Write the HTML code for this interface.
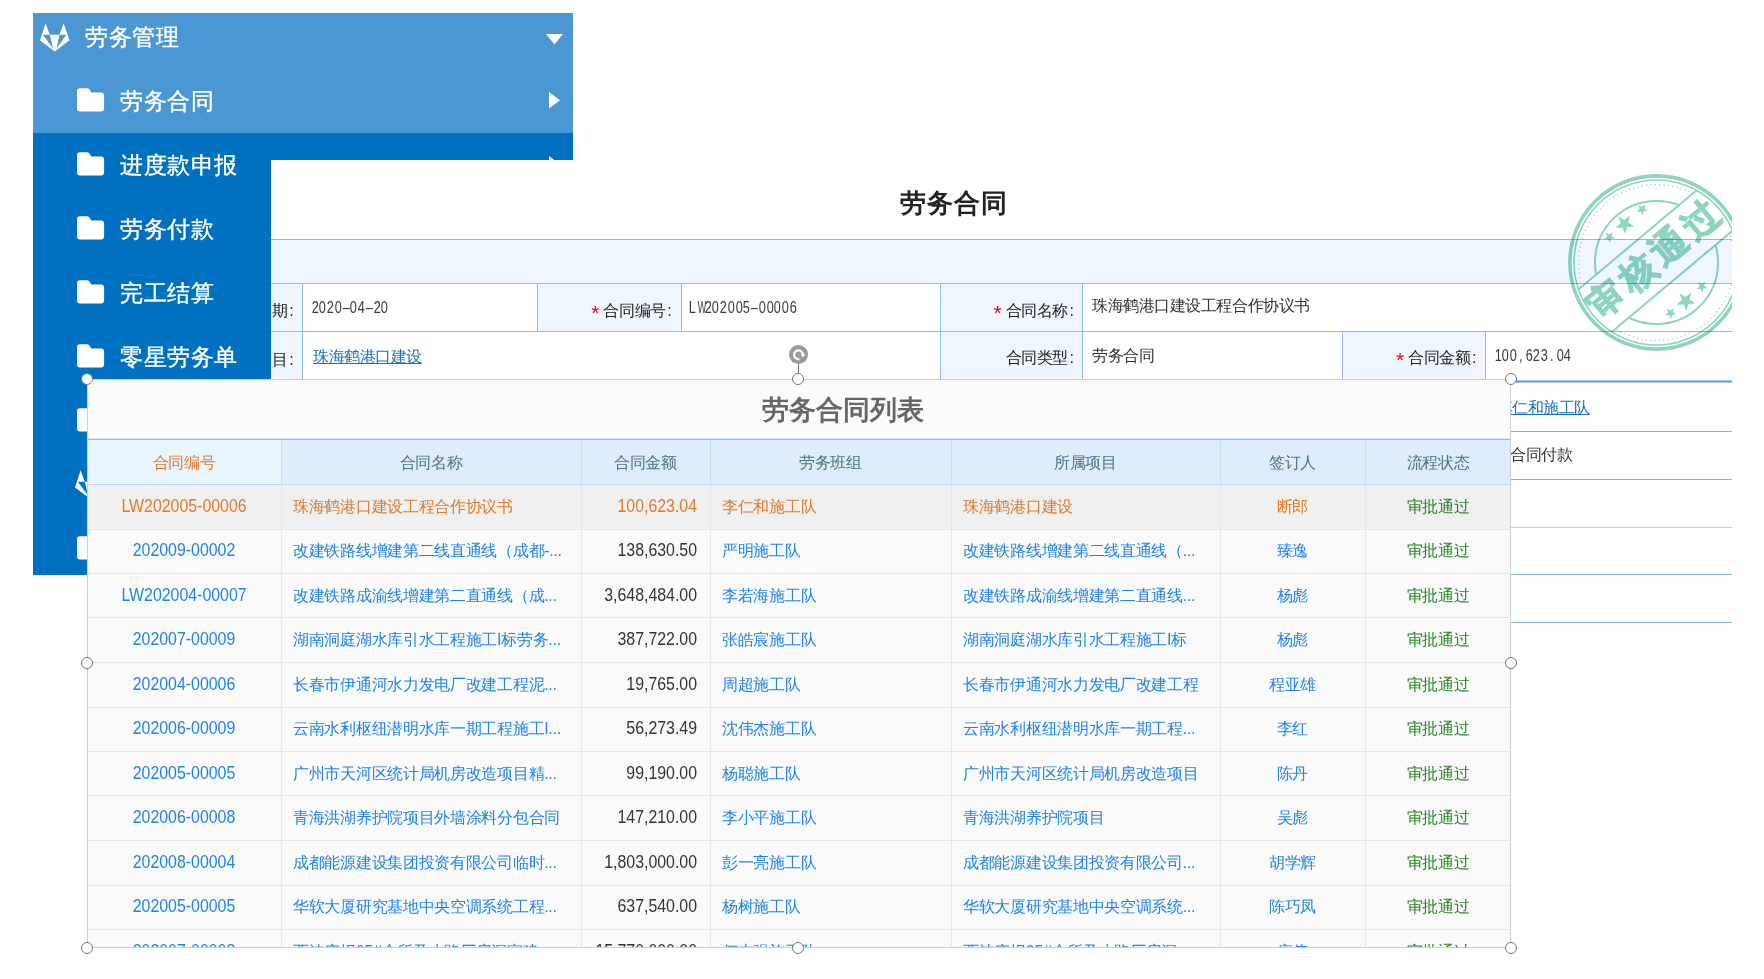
<!DOCTYPE html>
<html><head><meta charset="utf-8">
<style>
*{margin:0;padding:0;box-sizing:border-box}
html,body{width:1764px;height:979px;overflow:hidden;background:#fff;font-family:"Liberation Sans",sans-serif}
.t{position:absolute;white-space:nowrap}
#side{position:absolute;left:33px;top:13px;width:540px;height:562px;background:#0070c0;overflow:hidden}
#side .hl{position:absolute;left:0;top:0;width:540px;height:120px;background:#4a97d3}
.si{position:absolute;color:#fff;font-size:23px;letter-spacing:0.5px;-webkit-text-stroke:0.4px #fff;line-height:30px;white-space:nowrap}
#form{position:absolute;left:271px;top:160px;width:1461px;height:470px;background:#fff;overflow:hidden}
.ft{position:absolute;font-size:16px;letter-spacing:-0.45px;color:#333;white-space:nowrap;line-height:20px}
.mono{letter-spacing:0;font-size:15.5px;color:#3a3a3a}
.mono i{font-style:normal;display:inline-block;width:7.75px;text-align:center;transform:scale(0.82,1.1);transform-origin:50% 15px}
.mono i.w{transform:scale(0.58,1.1)}
.lbl{font-size:16px;color:#222}
.req{color:#f00;font-size:21px;vertical-align:-4px;letter-spacing:0}
#ov{position:absolute;left:87px;top:379px;width:1424px;height:569px;background:#fcfcfc;overflow:hidden}
.c{position:absolute;font-size:16px;letter-spacing:-0.3px;white-space:nowrap;line-height:20px}
.la{font-size:15.9px;letter-spacing:0;transform:scaleY(1.2);transform-origin:50% 15px}
.hd{position:absolute;width:12px;height:12px;border-radius:50%;background:#fff;border:1px solid #777}
</style></head><body>

<div id="side"><div class="hl"></div>
<svg class="t" style="left:6px;top:10px" width="32" height="30" viewBox="0 0 32 28" preserveAspectRatio="none"><path d="M1,16.3 L6.6,0.3 L10.8,10.9 L20.4,10.9 L24.6,0.3 L30.5,16.1 L15.8,26.5 Z" fill="#fff"/><path d="M3.9,10.9 L10.8,10.9 L14,23.7 Z M20.4,10.9 L27.3,10.9 L17.6,23.7 Z" fill="#4a97d3"/></svg>
<div class="si" style="left:52px;top:9px">劳务管理</div>
<svg class="t" style="left:513px;top:21px" width="18" height="11"><path d="M0,0 H17 L8.5,10.5 Z" fill="#fff"/></svg>
<svg class="t" style="left:43.599999999999994px;top:75.3px" width="28" height="24" viewBox="0 0 28 24"><path d="M3,0.3 H10 Q12,0.3 13,2 L14.2,4.6 H24 Q27.1,4.6 27.1,7.6 V20.5 Q27.1,23.5 24,23.5 H3 Q0,23.5 0,20.5 V3.3 Q0,0.3 3,0.3 Z" fill="#fff"/></svg>
<div class="si" style="left:87px;top:73px">劳务合同</div>
<svg class="t" style="left:515.6px;top:79px" width="12" height="17"><path d="M0,0 L11,8.3 L0,16.6 Z" fill="#fff"/></svg>
<svg class="t" style="left:43.599999999999994px;top:139.3px" width="28" height="24" viewBox="0 0 28 24"><path d="M3,0.3 H10 Q12,0.3 13,2 L14.2,4.6 H24 Q27.1,4.6 27.1,7.6 V20.5 Q27.1,23.5 24,23.5 H3 Q0,23.5 0,20.5 V3.3 Q0,0.3 3,0.3 Z" fill="#fff"/></svg>
<div class="si" style="left:87px;top:137px">进度款申报</div>
<svg class="t" style="left:515.6px;top:143px" width="12" height="17"><path d="M0,0 L11,8.3 L0,16.6 Z" fill="#fff"/></svg>
<svg class="t" style="left:43.599999999999994px;top:203.3px" width="28" height="24" viewBox="0 0 28 24"><path d="M3,0.3 H10 Q12,0.3 13,2 L14.2,4.6 H24 Q27.1,4.6 27.1,7.6 V20.5 Q27.1,23.5 24,23.5 H3 Q0,23.5 0,20.5 V3.3 Q0,0.3 3,0.3 Z" fill="#fff"/></svg>
<div class="si" style="left:87px;top:201px">劳务付款</div>
<svg class="t" style="left:43.599999999999994px;top:267.3px" width="28" height="24" viewBox="0 0 28 24"><path d="M3,0.3 H10 Q12,0.3 13,2 L14.2,4.6 H24 Q27.1,4.6 27.1,7.6 V20.5 Q27.1,23.5 24,23.5 H3 Q0,23.5 0,20.5 V3.3 Q0,0.3 3,0.3 Z" fill="#fff"/></svg>
<div class="si" style="left:87px;top:265px">完工结算</div>
<svg class="t" style="left:43.599999999999994px;top:331.3px" width="28" height="24" viewBox="0 0 28 24"><path d="M3,0.3 H10 Q12,0.3 13,2 L14.2,4.6 H24 Q27.1,4.6 27.1,7.6 V20.5 Q27.1,23.5 24,23.5 H3 Q0,23.5 0,20.5 V3.3 Q0,0.3 3,0.3 Z" fill="#fff"/></svg>
<div class="si" style="left:87px;top:329px">零星劳务单</div>
<svg class="t" style="left:43.599999999999994px;top:395.3px" width="28" height="24" viewBox="0 0 28 24"><path d="M3,0.3 H10 Q12,0.3 13,2 L14.2,4.6 H24 Q27.1,4.6 27.1,7.6 V20.5 Q27.1,23.5 24,23.5 H3 Q0,23.5 0,20.5 V3.3 Q0,0.3 3,0.3 Z" fill="#fff"/></svg>
<svg class="t" style="left:40.5px;top:456.5px" width="32" height="30" viewBox="0 0 32 28" preserveAspectRatio="none"><path d="M1,16.3 L6.6,0.3 L10.8,10.9 L20.4,10.9 L24.6,0.3 L30.5,16.1 L15.8,26.5 Z" fill="#fff"/><path d="M3.9,10.9 L10.8,10.9 L14,23.7 Z M20.4,10.9 L27.3,10.9 L17.6,23.7 Z" fill="#0070c0"/></svg>
<svg class="t" style="left:43.599999999999994px;top:523.3px" width="28" height="24" viewBox="0 0 28 24"><path d="M3,0.3 H10 Q12,0.3 13,2 L14.2,4.6 H24 Q27.1,4.6 27.1,7.6 V20.5 Q27.1,23.5 24,23.5 H3 Q0,23.5 0,20.5 V3.3 Q0,0.3 3,0.3 Z" fill="#fff"/></svg>
</div>
<div id="form">
<div class="t" style="left:629px;top:25px;font-size:26px;font-weight:bold;color:#222;line-height:36px;letter-spacing:1px">劳务合同</div>
<div class="t" style="left:0.0px;top:79.0px;width:1461.0px;height:44.0px;background:#eff6fd"></div>
<div class="t" style="left:0.0px;top:79.0px;width:1461.0px;height:1.0px;background:#8ebce6"></div>
<div class="t" style="left:0.0px;top:123.0px;width:1461.0px;height:1.0px;background:#8ebce6"></div>
<div class="t" style="left:0.0px;top:124.0px;width:31.0px;height:47.0px;background:#eff6fd"></div>
<div class="t" style="left:266.0px;top:124.0px;width:144.0px;height:47.0px;background:#eff6fd"></div>
<div class="t" style="left:669.0px;top:124.0px;width:143.0px;height:47.0px;background:#eff6fd"></div>
<div class="t" style="left:0.0px;top:172.0px;width:31.0px;height:48.0px;background:#eff6fd"></div>
<div class="t" style="left:669.0px;top:172.0px;width:143.0px;height:48.0px;background:#eff6fd"></div>
<div class="t" style="left:1072.0px;top:172.0px;width:143.0px;height:48.0px;background:#eff6fd"></div>
<div class="t" style="left:0.0px;top:171.0px;width:1461.0px;height:1.0px;background:#8ebce6"></div>
<div class="t" style="left:31.0px;top:123.0px;width:1.0px;height:97.0px;background:#8ebce6"></div>
<div class="t" style="left:266.0px;top:123.0px;width:1.0px;height:48.0px;background:#8ebce6"></div>
<div class="t" style="left:410.0px;top:123.0px;width:1.0px;height:48.0px;background:#8ebce6"></div>
<div class="t" style="left:669.0px;top:123.0px;width:1.0px;height:97.0px;background:#8ebce6"></div>
<div class="t" style="left:811.0px;top:123.0px;width:1.0px;height:97.0px;background:#8ebce6"></div>
<div class="t" style="left:1071.0px;top:171.0px;width:1.0px;height:49.0px;background:#8ebce6"></div>
<div class="t" style="left:1214.0px;top:171.0px;width:1.0px;height:49.0px;background:#8ebce6"></div>
<div class="t" style="left:0.0px;top:220.0px;width:1461.0px;height:3.0px;background:#a8cbec"></div>
<div class="t" style="left:0.0px;top:221.0px;width:1461.0px;height:1.0px;background:#5b9bd5"></div>
<div class="t" style="left:0.0px;top:271.0px;width:1461.0px;height:1.0px;background:#7fb4e2"></div>
<div class="t" style="left:0.0px;top:319.0px;width:1461.0px;height:1.0px;background:#7fb4e2"></div>
<div class="t" style="left:0.0px;top:414.0px;width:1461.0px;height:1.0px;background:#7fb4e2"></div>
<div class="t" style="left:0.0px;top:462.0px;width:1461.0px;height:1.0px;background:#7fb4e2"></div>
<div class="t" style="left:0.0px;top:366.5px;width:1461.0px;height:1.5px;background:#b3d3ec"></div>
<div class="ft lbl" style="right:1438.7px;top:140.5px;text-align:right">期<span style="margin-left:1.5px">:</span></div>
<div class="ft lbl" style="right:1060.8px;top:140.5px;text-align:right"><span class="req">*</span> 合同编号<span style="margin-left:1.5px">:</span></div>
<div class="ft lbl" style="right:658.5px;top:140.5px;text-align:right"><span class="req">*</span> 合同名称<span style="margin-left:1.5px">:</span></div>
<div class="ft lbl" style="right:1438.7px;top:189.5px;text-align:right">目<span style="margin-left:1.5px">:</span></div>
<div class="ft lbl" style="right:658.5px;top:187.5px;text-align:right">合同类型<span style="margin-left:1.5px">:</span></div>
<div class="ft lbl" style="right:256.0px;top:187.5px;text-align:right"><span class="req">*</span> 合同金额<span style="margin-left:1.5px">:</span></div>
<div class="ft" style="left:39.5px;top:137.5px;"><span class="mono"><i>2</i><i>0</i><i>2</i><i>0</i><i>&#8211;</i><i>0</i><i>4</i><i>&#8211;</i><i>2</i><i>0</i></span></div>
<div class="ft" style="left:417.0px;top:137.5px;"><span class="mono"><i>L</i><i class="w">W</i><i>2</i><i>0</i><i>2</i><i>0</i><i>0</i><i>5</i><i>&#8211;</i><i>0</i><i>0</i><i>0</i><i>0</i><i>6</i></span></div>
<div class="ft" style="left:821.0px;top:136.0px;">珠海鹤港口建设工程合作协议书</div>
<div class="ft" style="left:42.0px;top:187.0px;"><u style="color:#1a6fc0">珠海鹤港口建设</u></div>
<div class="ft" style="left:821.0px;top:186.0px;">劳务合同</div>
<div class="ft" style="left:1222.5px;top:185.5px;"><span class="mono"><i>1</i><i>0</i><i>0</i><i>,</i><i>6</i><i>2</i><i>3</i><i>.</i><i>0</i><i>4</i></span></div>
<div class="ft" style="left:1225.5px;top:238.0px;"><u style="color:#1a6fc0">李仁和施工队</u></div>
<div class="ft" style="left:1208.0px;top:285.0px;">劳务合同付款</div>
<svg class="t" style="left:0;top:0;mix-blend-mode:multiply" width="1461" height="470"><defs><mask id="bm"><rect x="0" y="0" width="1461" height="470" fill="#fff"/><g transform="translate(1385.5 102.5) rotate(-40)"><rect x="-100" y="-29.5" width="200" height="54" fill="#000"/></g></mask><clipPath id="cc"><circle cx="1385.5" cy="102.5" r="83"/></clipPath></defs><g fill="none" stroke="#8cd5c0"><circle cx="1385.5" cy="102.5" r="86.6" stroke-width="3.6"/><circle cx="1385.5" cy="102.5" r="82.5" stroke-width="1.6"/><g mask="url(#bm)"><circle cx="1385.5" cy="102.5" r="78" stroke-width="1.2" stroke-dasharray="1.2 3.2"/><circle cx="1385.5" cy="102.5" r="61.5" stroke-width="2"/></g></g><g clip-path="url(#cc)"><g transform="translate(1385.5 102.5) rotate(-40)"><line x1="-95" y1="-29.5" x2="95" y2="-29.5" stroke="#8cd5c0" stroke-width="2"/><line x1="-95" y1="24.5" x2="95" y2="24.5" stroke="#8cd5c0" stroke-width="2"/></g></g><g transform="translate(1385.5 102.5) rotate(-40)"><text x="2" y="8" text-anchor="middle" font-size="36" font-weight="bold" fill="#8cd5c0" stroke="#8cd5c0" stroke-width="1.2" letter-spacing="5" font-family="Liberation Sans">审核通过</text></g><g fill="#8cd5c0"><polygon points="1334.54,72.30 1338.23,74.51 1341.58,71.81 1340.63,76.00 1344.22,78.35 1339.94,78.74 1338.82,82.89 1337.13,78.94 1332.84,79.15 1336.07,76.32"/><polygon points="1347.17,56.34 1353.32,60.01 1358.90,55.52 1357.31,62.50 1363.30,66.42 1356.17,67.06 1354.30,73.98 1351.48,67.39 1344.33,67.75 1349.72,63.03"/><polygon points="1367.14,44.80 1370.83,47.01 1374.18,44.31 1373.23,48.50 1376.82,50.85 1372.54,51.24 1371.42,55.39 1369.73,51.44 1365.44,51.65 1368.67,48.82"/><polygon points="1395.64,148.40 1399.33,150.61 1402.68,147.91 1401.73,152.10 1405.32,154.45 1401.04,154.84 1399.92,158.99 1398.23,155.04 1393.94,155.25 1397.17,152.42"/><polygon points="1408.37,133.34 1414.52,137.01 1420.10,132.52 1418.51,139.50 1424.50,143.42 1417.37,144.06 1415.50,150.98 1412.68,144.39 1405.53,144.75 1410.92,140.03"/><polygon points="1427.14,122.10 1430.83,124.31 1434.18,121.61 1433.23,125.80 1436.82,128.15 1432.54,128.54 1431.42,132.69 1429.73,128.74 1425.44,128.95 1428.67,126.12"/></g></svg>
</div>
<div id="ov">
<div class="t" style="left:674.5px;top:13px;font-size:26.5px;font-weight:bold;color:#666;line-height:36px">劳务合同列表</div>
<div class="t" style="left:0.0px;top:60.0px;width:1424.0px;height:45.0px;background:#ddedfb"></div>
<div class="t" style="left:0.0px;top:61.0px;width:194.0px;height:44.0px;background:#e9f5fe"></div>
<div class="t" style="left:0.0px;top:59.0px;width:1424.0px;height:1.0px;background:#d3e6f6"></div>
<div class="t" style="left:0.0px;top:60.0px;width:1424.0px;height:1.0px;background:#8fc0e9"></div>
<div class="t" style="left:0.0px;top:105.0px;width:1424.0px;height:1.0px;background:#bcd8f2"></div>
<div class="t" style="left:194.0px;top:61.0px;width:1.0px;height:44.0px;background:#c8ddf1"></div>
<div class="t" style="left:494.0px;top:61.0px;width:1.0px;height:44.0px;background:#c8ddf1"></div>
<div class="t" style="left:623.0px;top:61.0px;width:1.0px;height:44.0px;background:#c8ddf1"></div>
<div class="t" style="left:864.0px;top:61.0px;width:1.0px;height:44.0px;background:#c8ddf1"></div>
<div class="t" style="left:1133.0px;top:61.0px;width:1.0px;height:44.0px;background:#c8ddf1"></div>
<div class="t" style="left:1278.0px;top:61.0px;width:1.0px;height:44.0px;background:#c8ddf1"></div>
<div class="c" style="left:0.0px;top:73.5px;width:194.0px;text-align:center;color:#e27a26">合同编号</div>
<div class="c" style="left:194.0px;top:73.5px;width:300.0px;text-align:center;color:#4e7190">合同名称</div>
<div class="c" style="left:494.0px;top:73.5px;width:129.0px;text-align:center;color:#4e7190">合同金额</div>
<div class="c" style="left:623.0px;top:73.5px;width:241.0px;text-align:center;color:#4e7190">劳务班组</div>
<div class="c" style="left:864.0px;top:73.5px;width:269.0px;text-align:center;color:#4e7190">所属项目</div>
<div class="c" style="left:1133.0px;top:73.5px;width:145.0px;text-align:center;color:#4e7190">签订人</div>
<div class="c" style="left:1278.0px;top:73.5px;width:146.0px;text-align:center;color:#4e7190">流程状态</div>
<div class="t" style="left:0.0px;top:106.0px;width:1424.0px;height:45.0px;background:#f0f0f0"></div>
<div class="t" style="left:0.0px;top:150.0px;width:1424.0px;height:1.0px;background:#e6e6e6"></div>
<div class="t" style="left:194.0px;top:106.0px;width:1.0px;height:45.0px;background:#e8e8e8"></div>
<div class="t" style="left:494.0px;top:106.0px;width:1.0px;height:45.0px;background:#e8e8e8"></div>
<div class="t" style="left:623.0px;top:106.0px;width:1.0px;height:45.0px;background:#e8e8e8"></div>
<div class="t" style="left:864.0px;top:106.0px;width:1.0px;height:45.0px;background:#e8e8e8"></div>
<div class="t" style="left:1133.0px;top:106.0px;width:1.0px;height:45.0px;background:#e8e8e8"></div>
<div class="t" style="left:1278.0px;top:106.0px;width:1.0px;height:45.0px;background:#e8e8e8"></div>
<div class="c la" style="left:0.0px;top:117.5px;width:194.0px;text-align:center;color:#e27a26">LW202005-00006</div>
<div class="c" style="left:206.0px;top:117.5px;color:#e27a26">珠海鹤港口建设工程合作协议书</div>
<div class="c la" style="right:814.0px;top:117.5px;color:#e27a26">100,623.04</div>
<div class="c" style="left:635.0px;top:117.5px;color:#e27a26">李仁和施工队</div>
<div class="c" style="left:876.0px;top:117.5px;color:#e27a26">珠海鹤港口建设</div>
<div class="c" style="left:1133.0px;top:117.5px;width:145.0px;text-align:center;color:#e27a26">断郎</div>
<div class="c" style="left:1278.0px;top:117.5px;width:146.0px;text-align:center;color:#268524">审批通过</div>
<div class="t" style="left:0.0px;top:151.0px;width:1424.0px;height:44.0px;background:#fafafa"></div>
<div class="t" style="left:0.0px;top:194.0px;width:1424.0px;height:1.0px;background:#e6e6e6"></div>
<div class="t" style="left:194.0px;top:151.0px;width:1.0px;height:44.0px;background:#e8e8e8"></div>
<div class="t" style="left:494.0px;top:151.0px;width:1.0px;height:44.0px;background:#e8e8e8"></div>
<div class="t" style="left:623.0px;top:151.0px;width:1.0px;height:44.0px;background:#e8e8e8"></div>
<div class="t" style="left:864.0px;top:151.0px;width:1.0px;height:44.0px;background:#e8e8e8"></div>
<div class="t" style="left:1133.0px;top:151.0px;width:1.0px;height:44.0px;background:#e8e8e8"></div>
<div class="t" style="left:1278.0px;top:151.0px;width:1.0px;height:44.0px;background:#e8e8e8"></div>
<div class="c la" style="left:0.0px;top:162.0px;width:194.0px;text-align:center;color:#1e84ec">202009-00002</div>
<div class="c" style="left:206.0px;top:162.0px;color:#1e84ec">改建铁路线增建第二线直通线（成都-...</div>
<div class="c la" style="right:814.0px;top:162.0px;color:#333">138,630.50</div>
<div class="c" style="left:635.0px;top:162.0px;color:#1e84ec">严明施工队</div>
<div class="c" style="left:876.0px;top:162.0px;color:#1e84ec">改建铁路线增建第二线直通线（...</div>
<div class="c" style="left:1133.0px;top:162.0px;width:145.0px;text-align:center;color:#1e84ec">臻逸</div>
<div class="c" style="left:1278.0px;top:162.0px;width:146.0px;text-align:center;color:#268524">审批通过</div>
<div class="t" style="left:0.0px;top:195.0px;width:1424.0px;height:44.0px;background:#fafafa"></div>
<div class="t" style="left:0.0px;top:238.0px;width:1424.0px;height:1.0px;background:#e6e6e6"></div>
<div class="t" style="left:194.0px;top:195.0px;width:1.0px;height:44.0px;background:#e8e8e8"></div>
<div class="t" style="left:494.0px;top:195.0px;width:1.0px;height:44.0px;background:#e8e8e8"></div>
<div class="t" style="left:623.0px;top:195.0px;width:1.0px;height:44.0px;background:#e8e8e8"></div>
<div class="t" style="left:864.0px;top:195.0px;width:1.0px;height:44.0px;background:#e8e8e8"></div>
<div class="t" style="left:1133.0px;top:195.0px;width:1.0px;height:44.0px;background:#e8e8e8"></div>
<div class="t" style="left:1278.0px;top:195.0px;width:1.0px;height:44.0px;background:#e8e8e8"></div>
<div class="c la" style="left:0.0px;top:206.5px;width:194.0px;text-align:center;color:#1e84ec">LW202004-00007</div>
<div class="c" style="left:206.0px;top:206.5px;color:#1e84ec">改建铁路成渝线增建第二直通线（成...</div>
<div class="c la" style="right:814.0px;top:206.5px;color:#333">3,648,484.00</div>
<div class="c" style="left:635.0px;top:206.5px;color:#1e84ec">李若海施工队</div>
<div class="c" style="left:876.0px;top:206.5px;color:#1e84ec">改建铁路成渝线增建第二直通线...</div>
<div class="c" style="left:1133.0px;top:206.5px;width:145.0px;text-align:center;color:#1e84ec">杨彪</div>
<div class="c" style="left:1278.0px;top:206.5px;width:146.0px;text-align:center;color:#268524">审批通过</div>
<div class="t" style="left:0.0px;top:239.0px;width:1424.0px;height:45.0px;background:#fafafa"></div>
<div class="t" style="left:0.0px;top:283.0px;width:1424.0px;height:1.0px;background:#e6e6e6"></div>
<div class="t" style="left:194.0px;top:239.0px;width:1.0px;height:45.0px;background:#e8e8e8"></div>
<div class="t" style="left:494.0px;top:239.0px;width:1.0px;height:45.0px;background:#e8e8e8"></div>
<div class="t" style="left:623.0px;top:239.0px;width:1.0px;height:45.0px;background:#e8e8e8"></div>
<div class="t" style="left:864.0px;top:239.0px;width:1.0px;height:45.0px;background:#e8e8e8"></div>
<div class="t" style="left:1133.0px;top:239.0px;width:1.0px;height:45.0px;background:#e8e8e8"></div>
<div class="t" style="left:1278.0px;top:239.0px;width:1.0px;height:45.0px;background:#e8e8e8"></div>
<div class="c la" style="left:0.0px;top:251.0px;width:194.0px;text-align:center;color:#1e84ec">202007-00009</div>
<div class="c" style="left:206.0px;top:251.0px;color:#1e84ec">湖南洞庭湖水库引水工程施工I标劳务...</div>
<div class="c la" style="right:814.0px;top:251.0px;color:#333">387,722.00</div>
<div class="c" style="left:635.0px;top:251.0px;color:#1e84ec">张皓宸施工队</div>
<div class="c" style="left:876.0px;top:251.0px;color:#1e84ec">湖南洞庭湖水库引水工程施工I标</div>
<div class="c" style="left:1133.0px;top:251.0px;width:145.0px;text-align:center;color:#1e84ec">杨彪</div>
<div class="c" style="left:1278.0px;top:251.0px;width:146.0px;text-align:center;color:#268524">审批通过</div>
<div class="t" style="left:0.0px;top:284.0px;width:1424.0px;height:45.0px;background:#fafafa"></div>
<div class="t" style="left:0.0px;top:328.0px;width:1424.0px;height:1.0px;background:#e6e6e6"></div>
<div class="t" style="left:194.0px;top:284.0px;width:1.0px;height:45.0px;background:#e8e8e8"></div>
<div class="t" style="left:494.0px;top:284.0px;width:1.0px;height:45.0px;background:#e8e8e8"></div>
<div class="t" style="left:623.0px;top:284.0px;width:1.0px;height:45.0px;background:#e8e8e8"></div>
<div class="t" style="left:864.0px;top:284.0px;width:1.0px;height:45.0px;background:#e8e8e8"></div>
<div class="t" style="left:1133.0px;top:284.0px;width:1.0px;height:45.0px;background:#e8e8e8"></div>
<div class="t" style="left:1278.0px;top:284.0px;width:1.0px;height:45.0px;background:#e8e8e8"></div>
<div class="c la" style="left:0.0px;top:295.5px;width:194.0px;text-align:center;color:#1e84ec">202004-00006</div>
<div class="c" style="left:206.0px;top:295.5px;color:#1e84ec">长春市伊通河水力发电厂改建工程泥...</div>
<div class="c la" style="right:814.0px;top:295.5px;color:#333">19,765.00</div>
<div class="c" style="left:635.0px;top:295.5px;color:#1e84ec">周超施工队</div>
<div class="c" style="left:876.0px;top:295.5px;color:#1e84ec">长春市伊通河水力发电厂改建工程</div>
<div class="c" style="left:1133.0px;top:295.5px;width:145.0px;text-align:center;color:#1e84ec">程亚雄</div>
<div class="c" style="left:1278.0px;top:295.5px;width:146.0px;text-align:center;color:#268524">审批通过</div>
<div class="t" style="left:0.0px;top:329.0px;width:1424.0px;height:44.0px;background:#fafafa"></div>
<div class="t" style="left:0.0px;top:372.0px;width:1424.0px;height:1.0px;background:#e6e6e6"></div>
<div class="t" style="left:194.0px;top:329.0px;width:1.0px;height:44.0px;background:#e8e8e8"></div>
<div class="t" style="left:494.0px;top:329.0px;width:1.0px;height:44.0px;background:#e8e8e8"></div>
<div class="t" style="left:623.0px;top:329.0px;width:1.0px;height:44.0px;background:#e8e8e8"></div>
<div class="t" style="left:864.0px;top:329.0px;width:1.0px;height:44.0px;background:#e8e8e8"></div>
<div class="t" style="left:1133.0px;top:329.0px;width:1.0px;height:44.0px;background:#e8e8e8"></div>
<div class="t" style="left:1278.0px;top:329.0px;width:1.0px;height:44.0px;background:#e8e8e8"></div>
<div class="c la" style="left:0.0px;top:340.0px;width:194.0px;text-align:center;color:#1e84ec">202006-00009</div>
<div class="c" style="left:206.0px;top:340.0px;color:#1e84ec">云南水利枢纽潜明水库一期工程施工I...</div>
<div class="c la" style="right:814.0px;top:340.0px;color:#333">56,273.49</div>
<div class="c" style="left:635.0px;top:340.0px;color:#1e84ec">沈伟杰施工队</div>
<div class="c" style="left:876.0px;top:340.0px;color:#1e84ec">云南水利枢纽潜明水库一期工程...</div>
<div class="c" style="left:1133.0px;top:340.0px;width:145.0px;text-align:center;color:#1e84ec">李红</div>
<div class="c" style="left:1278.0px;top:340.0px;width:146.0px;text-align:center;color:#268524">审批通过</div>
<div class="t" style="left:0.0px;top:373.0px;width:1424.0px;height:44.0px;background:#fafafa"></div>
<div class="t" style="left:0.0px;top:416.0px;width:1424.0px;height:1.0px;background:#e6e6e6"></div>
<div class="t" style="left:194.0px;top:373.0px;width:1.0px;height:44.0px;background:#e8e8e8"></div>
<div class="t" style="left:494.0px;top:373.0px;width:1.0px;height:44.0px;background:#e8e8e8"></div>
<div class="t" style="left:623.0px;top:373.0px;width:1.0px;height:44.0px;background:#e8e8e8"></div>
<div class="t" style="left:864.0px;top:373.0px;width:1.0px;height:44.0px;background:#e8e8e8"></div>
<div class="t" style="left:1133.0px;top:373.0px;width:1.0px;height:44.0px;background:#e8e8e8"></div>
<div class="t" style="left:1278.0px;top:373.0px;width:1.0px;height:44.0px;background:#e8e8e8"></div>
<div class="c la" style="left:0.0px;top:384.5px;width:194.0px;text-align:center;color:#1e84ec">202005-00005</div>
<div class="c" style="left:206.0px;top:384.5px;color:#1e84ec">广州市天河区统计局机房改造项目精...</div>
<div class="c la" style="right:814.0px;top:384.5px;color:#333">99,190.00</div>
<div class="c" style="left:635.0px;top:384.5px;color:#1e84ec">杨聪施工队</div>
<div class="c" style="left:876.0px;top:384.5px;color:#1e84ec">广州市天河区统计局机房改造项目</div>
<div class="c" style="left:1133.0px;top:384.5px;width:145.0px;text-align:center;color:#1e84ec">陈丹</div>
<div class="c" style="left:1278.0px;top:384.5px;width:146.0px;text-align:center;color:#268524">审批通过</div>
<div class="t" style="left:0.0px;top:417.0px;width:1424.0px;height:45.0px;background:#fafafa"></div>
<div class="t" style="left:0.0px;top:461.0px;width:1424.0px;height:1.0px;background:#e6e6e6"></div>
<div class="t" style="left:194.0px;top:417.0px;width:1.0px;height:45.0px;background:#e8e8e8"></div>
<div class="t" style="left:494.0px;top:417.0px;width:1.0px;height:45.0px;background:#e8e8e8"></div>
<div class="t" style="left:623.0px;top:417.0px;width:1.0px;height:45.0px;background:#e8e8e8"></div>
<div class="t" style="left:864.0px;top:417.0px;width:1.0px;height:45.0px;background:#e8e8e8"></div>
<div class="t" style="left:1133.0px;top:417.0px;width:1.0px;height:45.0px;background:#e8e8e8"></div>
<div class="t" style="left:1278.0px;top:417.0px;width:1.0px;height:45.0px;background:#e8e8e8"></div>
<div class="c la" style="left:0.0px;top:429.0px;width:194.0px;text-align:center;color:#1e84ec">202006-00008</div>
<div class="c" style="left:206.0px;top:429.0px;color:#1e84ec">青海洪湖养护院项目外墙涂料分包合同</div>
<div class="c la" style="right:814.0px;top:429.0px;color:#333">147,210.00</div>
<div class="c" style="left:635.0px;top:429.0px;color:#1e84ec">李小平施工队</div>
<div class="c" style="left:876.0px;top:429.0px;color:#1e84ec">青海洪湖养护院项目</div>
<div class="c" style="left:1133.0px;top:429.0px;width:145.0px;text-align:center;color:#1e84ec">吴彪</div>
<div class="c" style="left:1278.0px;top:429.0px;width:146.0px;text-align:center;color:#268524">审批通过</div>
<div class="t" style="left:0.0px;top:462.0px;width:1424.0px;height:45.0px;background:#fafafa"></div>
<div class="t" style="left:0.0px;top:506.0px;width:1424.0px;height:1.0px;background:#e6e6e6"></div>
<div class="t" style="left:194.0px;top:462.0px;width:1.0px;height:45.0px;background:#e8e8e8"></div>
<div class="t" style="left:494.0px;top:462.0px;width:1.0px;height:45.0px;background:#e8e8e8"></div>
<div class="t" style="left:623.0px;top:462.0px;width:1.0px;height:45.0px;background:#e8e8e8"></div>
<div class="t" style="left:864.0px;top:462.0px;width:1.0px;height:45.0px;background:#e8e8e8"></div>
<div class="t" style="left:1133.0px;top:462.0px;width:1.0px;height:45.0px;background:#e8e8e8"></div>
<div class="t" style="left:1278.0px;top:462.0px;width:1.0px;height:45.0px;background:#e8e8e8"></div>
<div class="c la" style="left:0.0px;top:473.5px;width:194.0px;text-align:center;color:#1e84ec">202008-00004</div>
<div class="c" style="left:206.0px;top:473.5px;color:#1e84ec">成都能源建设集团投资有限公司临时...</div>
<div class="c la" style="right:814.0px;top:473.5px;color:#333">1,803,000.00</div>
<div class="c" style="left:635.0px;top:473.5px;color:#1e84ec">彭一亮施工队</div>
<div class="c" style="left:876.0px;top:473.5px;color:#1e84ec">成都能源建设集团投资有限公司...</div>
<div class="c" style="left:1133.0px;top:473.5px;width:145.0px;text-align:center;color:#1e84ec">胡学辉</div>
<div class="c" style="left:1278.0px;top:473.5px;width:146.0px;text-align:center;color:#268524">审批通过</div>
<div class="t" style="left:0.0px;top:507.0px;width:1424.0px;height:44.0px;background:#fafafa"></div>
<div class="t" style="left:0.0px;top:550.0px;width:1424.0px;height:1.0px;background:#e6e6e6"></div>
<div class="t" style="left:194.0px;top:507.0px;width:1.0px;height:44.0px;background:#e8e8e8"></div>
<div class="t" style="left:494.0px;top:507.0px;width:1.0px;height:44.0px;background:#e8e8e8"></div>
<div class="t" style="left:623.0px;top:507.0px;width:1.0px;height:44.0px;background:#e8e8e8"></div>
<div class="t" style="left:864.0px;top:507.0px;width:1.0px;height:44.0px;background:#e8e8e8"></div>
<div class="t" style="left:1133.0px;top:507.0px;width:1.0px;height:44.0px;background:#e8e8e8"></div>
<div class="t" style="left:1278.0px;top:507.0px;width:1.0px;height:44.0px;background:#e8e8e8"></div>
<div class="c la" style="left:0.0px;top:518.0px;width:194.0px;text-align:center;color:#1e84ec">202005-00005</div>
<div class="c" style="left:206.0px;top:518.0px;color:#1e84ec">华软大厦研究基地中央空调系统工程...</div>
<div class="c la" style="right:814.0px;top:518.0px;color:#333">637,540.00</div>
<div class="c" style="left:635.0px;top:518.0px;color:#1e84ec">杨树施工队</div>
<div class="c" style="left:876.0px;top:518.0px;color:#1e84ec">华软大厦研究基地中央空调系统...</div>
<div class="c" style="left:1133.0px;top:518.0px;width:145.0px;text-align:center;color:#1e84ec">陈巧凤</div>
<div class="c" style="left:1278.0px;top:518.0px;width:146.0px;text-align:center;color:#268524">审批通过</div>
<div class="t" style="left:0.0px;top:551.0px;width:1424.0px;height:44.0px;background:#fafafa"></div>
<div class="t" style="left:0.0px;top:594.0px;width:1424.0px;height:1.0px;background:#e6e6e6"></div>
<div class="t" style="left:194.0px;top:551.0px;width:1.0px;height:44.0px;background:#e8e8e8"></div>
<div class="t" style="left:494.0px;top:551.0px;width:1.0px;height:44.0px;background:#e8e8e8"></div>
<div class="t" style="left:623.0px;top:551.0px;width:1.0px;height:44.0px;background:#e8e8e8"></div>
<div class="t" style="left:864.0px;top:551.0px;width:1.0px;height:44.0px;background:#e8e8e8"></div>
<div class="t" style="left:1133.0px;top:551.0px;width:1.0px;height:44.0px;background:#e8e8e8"></div>
<div class="t" style="left:1278.0px;top:551.0px;width:1.0px;height:44.0px;background:#e8e8e8"></div>
<div class="c la" style="left:0.0px;top:562.5px;width:194.0px;text-align:center;color:#1e84ec">202007-00008</div>
<div class="c" style="left:206.0px;top:562.5px;color:#1e84ec">西沈庄坝05#合所及水路厂房洞室建...</div>
<div class="c la" style="right:814.0px;top:562.5px;color:#333">15,770,000.00</div>
<div class="c" style="left:635.0px;top:562.5px;color:#1e84ec">何志强施工队</div>
<div class="c" style="left:876.0px;top:562.5px;color:#1e84ec">西沈庄坝05#合所及水路厂房洞...</div>
<div class="c" style="left:1133.0px;top:562.5px;width:145.0px;text-align:center;color:#1e84ec">庞伟</div>
<div class="c" style="left:1278.0px;top:562.5px;width:146.0px;text-align:center;color:#268524">审批通过</div>
<div class="t" style="left:0.0px;top:0.0px;width:1424.0px;height:1.0px;background:#cfcfcf"></div>
<div class="t" style="left:0.0px;top:568.0px;width:1424.0px;height:1.0px;background:#cfcfcf"></div>
<div class="t" style="left:0.0px;top:0.0px;width:1.0px;height:569.0px;background:#cfcfcf"></div>
<div class="t" style="left:1423.0px;top:0.0px;width:1.0px;height:569.0px;background:#cfcfcf"></div>
</div>
<div class="hd" style="left:81.0px;top:373.0px"></div>
<div class="hd" style="left:792.0px;top:373.0px"></div>
<div class="hd" style="left:1505.0px;top:373.0px"></div>
<div class="hd" style="left:81.0px;top:657.0px"></div>
<div class="hd" style="left:1505.0px;top:657.0px"></div>
<div class="hd" style="left:81.0px;top:942.0px"></div>
<div class="hd" style="left:792.0px;top:942.0px"></div>
<div class="hd" style="left:1505.0px;top:942.0px"></div>
<div class="t" style="left:798px;top:362px;width:1px;height:12px;background:#777"></div>
<svg class="t" style="left:788px;top:344px" width="21" height="21" viewBox="0 0 21 21"><circle cx="10.5" cy="10.5" r="9.5" fill="#9a9a9a"/><path d="M11.4,15.1 A4.4,4.4 0 1 1 14.9,10.3" fill="none" stroke="#fff" stroke-width="2.2"/><path d="M12.5,10.1 L17.3,10.1 L14.9,13.6 Z" fill="#fff"/></svg>
</body></html>
